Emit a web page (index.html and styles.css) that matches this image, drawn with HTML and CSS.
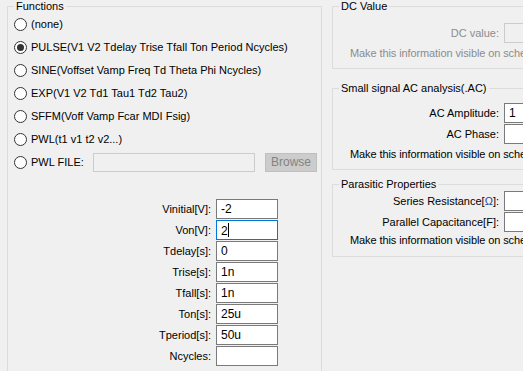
FILE: index.html
```html
<!DOCTYPE html>
<html lang="en">
<head>
    <meta charset="UTF-8">
    <title>Independent Voltage Source</title>
    <link rel="stylesheet" href="styles.css">
</head>
<body>
    <div class="dialog">
        <fieldset class="group functions">
            <legend>Functions</legend>
            <label class="radio-row"><span class="radio"></span>(none)</label>
            <label class="radio-row"><span class="radio checked"></span>PULSE(V1 V2 Tdelay Trise Tfall Ton Period Ncycles)</label>
            <label class="radio-row"><span class="radio"></span>SINE(Voffset Vamp Freq Td Theta Phi Ncycles)</label>
            <label class="radio-row"><span class="radio"></span>EXP(V1 V2 Td1 Tau1 Td2 Tau2)</label>
            <label class="radio-row"><span class="radio"></span>SFFM(Voff Vamp Fcar MDI Fsig)</label>
            <label class="radio-row"><span class="radio"></span>PWL(t1 v1 t2 v2...)</label>
            <div class="radio-row">
                <span class="radio"></span><span class="file-label">PWL FILE:</span>
                <span class="textbox disabled file-box"></span>
                <span class="button disabled">Browse</span>
            </div>

            <div class="params">
                <span class="param-label">Vinitial[V]:</span><span class="textbox">-2</span>
                <span class="param-label">Von[V]:</span><span class="textbox focused">2<i class="caret"></i></span>
                <span class="param-label">Tdelay[s]:</span><span class="textbox">0</span>
                <span class="param-label">Trise[s]:</span><span class="textbox">1n</span>
                <span class="param-label">Tfall[s]:</span><span class="textbox">1n</span>
                <span class="param-label">Ton[s]:</span><span class="textbox">25u</span>
                <span class="param-label">Tperiod[s]:</span><span class="textbox">50u</span>
                <span class="param-label">Ncycles:</span><span class="textbox"></span>
            </div>
        </fieldset>

        <div class="side">
            <fieldset class="group dc">
                <legend>DC Value</legend>
                <div class="field-row">
                    <span class="field-label muted">DC value:</span><span class="textbox disabled"></span>
                </div>
                <div class="note muted">Make this information visible on schematic</div>
            </fieldset>

            <fieldset class="group ac">
                <legend>Small signal AC analysis(.AC)</legend>
                <div class="field-row">
                    <span class="field-label">AC Amplitude:</span><span class="textbox">1</span>
                </div>
                <div class="field-row">
                    <span class="field-label">AC Phase:</span><span class="textbox"></span>
                </div>
                <div class="note">Make this information visible on schematic</div>
            </fieldset>

            <fieldset class="group parasitic">
                <legend>Parasitic Properties</legend>
                <div class="field-row">
                    <span class="field-label">Series Resistance[<span class="ohm">&Omega;</span>]:</span><span class="textbox"></span>
                </div>
                <div class="field-row">
                    <span class="field-label">Parallel Capacitance[F]:</span><span class="textbox"></span>
                </div>
                <div class="note">Make this information visible on schematic</div>
            </fieldset>
        </div>
    </div>
</body>
</html>
```

FILE: styles.css
```css
html, body {
    margin: 0;
    padding: 0;
    overflow: hidden;
    background-color: #f0f0f0;
}

body {
    font-family: 'Liberation Sans', Arial, sans-serif;
    font-size: 11px;
    line-height: 13px;
    color: #000;
    width: 523px;
    height: 371px;
}

.dialog {
    display: flex;
    align-items: flex-start;
    gap: 10px;
    padding-left: 7px;
}

.group {
    border: 1px solid #dcdcdc;
    margin: 0;
    padding: 0;
    min-width: 0;
}

.group legend {
    padding: 0 2px;
    margin-left: 6px;
    line-height: 13px;
}

/* left box */
.functions {
    width: 313px;
    height: 420px;
    flex-shrink: 0;
}

.radio-row {
    display: flex;
    align-items: center;
    height: 23px;
    padding-left: 6px;
}

.radio {
    width: 11px;
    height: 11px;
    border: 1px solid #333;
    border-radius: 50%;
    background-color: #fff;
    margin-right: 4px;
    position: relative;
    flex-shrink: 0;
}

.radio.checked::after {
    content: "";
    position: absolute;
    left: 2px;
    top: 2px;
    width: 7px;
    height: 7px;
    border-radius: 50%;
    background-color: #333;
}

.file-label {
    width: 62px;
}

.textbox {
    display: block;
    box-sizing: border-box;
    height: 20px;
    border: 1px solid #7a7a7a;
    background-color: #fff;
    padding: 2px 4px 0;
    font-size: 12px;
    line-height: 15px;
}

.textbox.disabled {
    border-color: #cccccc;
    background-color: #f0f0f0;
}

.textbox.focused {
    border-color: #0078d7;
}

.caret {
    display: inline-block;
    width: 1px;
    height: 14px;
    background-color: #000;
    vertical-align: -2px;
}

.file-box {
    width: 162px;
    height: 19px;
    margin-right: 10px;
}

.button {
    box-sizing: border-box;
    width: 52px;
    height: 19px;
    border: 1px solid #bfbfbf;
    background-color: #cccccc;
    color: #838383;
    font-size: 12px;
    line-height: 17px;
    text-align: center;
}

.params {
    display: grid;
    grid-template-columns: 110px 62px;
    column-gap: 5px;
    row-gap: 1px;
    align-items: center;
    margin-top: 25px;
    margin-left: 93px;
}

.param-label {
    text-align: right;
}

/* right column */
.side {
    display: flex;
    flex-direction: column;
    flex-shrink: 0;
}

.side .group {
    width: 240px;
    padding: 0 0 8px 0;
}

.field-row {
    display: flex;
    align-items: center;
    margin-bottom: 1px;
}

.field-label {
    width: 166px;
    text-align: right;
    margin-right: 5px;
}

.field-row .textbox {
    width: 60px;
}

.note {
    padding-left: 17px;
    margin-top: 4px;
    white-space: nowrap;
    letter-spacing: -0.1px;
}

.muted {
    color: #8c8c8c;
}

.dc .field-row {
    margin-top: 10px;
}

.side .ac {
    margin-top: 13px;
}

.ac .field-row:first-of-type {
    margin-top: 8px;
}

.side .parasitic {
    margin-top: 8px;
    padding-bottom: 9px;
}

.parasitic .field-row:first-of-type {
    margin-top: 0;
}

.parasitic .note {
    margin-top: 2px;
}

.ohm {
    color: #1a3fa0;
}
```
